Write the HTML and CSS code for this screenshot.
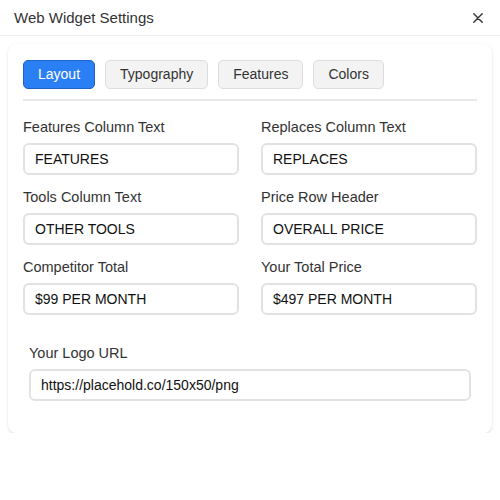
FILE: index.html
```html
<!DOCTYPE html>
<html>
<head>
<meta charset="utf-8">
<link rel="stylesheet" href="styles.css">
</head>
<body>
<div class="header">
  <div class="title">Web Widget Settings</div>
  <button class="close" aria-label="Close">
    <svg width="10" height="10" viewBox="0 0 10 10"><path d="M0.8 0.8L9.2 9.2M9.2 0.8L0.8 9.2" stroke="#333" stroke-width="1.4" fill="none" stroke-linecap="round"/></svg>
  </button>
</div>
<div class="card">
  <div class="tabs">
    <button class="tab active">Layout</button>
    <button class="tab">Typography</button>
    <button class="tab">Features</button>
    <button class="tab">Colors</button>
  </div>
  <div class="divider"></div>
  <div class="grid">
    <div class="field"><label>Features Column Text</label><input type="text" value="FEATURES"></div>
    <div class="field"><label>Replaces Column Text</label><input type="text" value="REPLACES"></div>
    <div class="field"><label>Tools Column Text</label><input type="text" value="OTHER TOOLS"></div>
    <div class="field"><label>Price Row Header</label><input type="text" value="OVERALL PRICE"></div>
    <div class="field"><label>Competitor Total</label><input type="text" value="$99 PER MONTH"></div>
    <div class="field"><label>Your Total Price</label><input type="text" value="$497 PER MONTH"></div>
  </div>
  <div class="logo-section">
    <div class="field last"><label>Your Logo URL</label><input type="text" value="https://placehold.co/150x50/png"></div>
  </div>
</div>
</body>
</html>
```
FILE: styles.css
```css
* { box-sizing: border-box; }
body {
  margin: 0;
  background: #fff;
  font-family: "Liberation Sans", Arial, sans-serif;
  color: #333;
}
.header {
  height: 36px;
  padding: 0 14px;
  border-bottom: 1px solid #eeeeee;
  display: flex;
  align-items: center;
  justify-content: space-between;
}
.title {
  font-size: 15px;
  color: #333;
}
.close {
  border: none;
  background: none;
  padding: 0;
  width: 10px;
  height: 10px;
  margin-right: 3px;
  display: flex;
}
.card {
  margin: 8px 8px 0;
  padding: 16px 15px 16px;
  border-radius: 8px;
  background: #fff;
  box-shadow: 0 1px 3px rgba(0,0,0,0.12), 0 1px 1px rgba(0,0,0,0.03);
}
.tabs {
  display: flex;
  gap: 10px;
}
.tab {
  font-family: "Liberation Sans", Arial, sans-serif;
  font-size: 14px;
  line-height: 17px;
  padding: 5px 14px;
  border: 1px solid #dddddd;
  background: #f3f3f3;
  color: #333;
  border-radius: 5px;
}
.tab.active {
  background: #2b7ff5;
  border-color: #1d63c9;
  color: #fff;
}
.divider {
  margin-top: 10px;
  height: 2px;
  background: #e8e8e8;
}
.grid {
  margin-top: 17px;
  display: grid;
  grid-template-columns: 1fr 1fr;
  column-gap: 22px;
}
.field {
  display: flex;
  flex-direction: column;
  margin-bottom: 13px;
}
.field.last { margin-bottom: 0; }
label {
  font-size: 14.5px;
  line-height: 18px;
  color: #333;
  margin-bottom: 7px;
}
input {
  height: 32px;
  border: 2px solid #e2e2e2;
  border-radius: 6px;
  padding: 0 10px;
  font-family: "Liberation Sans", Arial, sans-serif;
  font-size: 14px;
  color: #111;
  background: #fff;
  outline: none;
}
.logo-section {
  padding: 16px 6px 16px;
}
```
